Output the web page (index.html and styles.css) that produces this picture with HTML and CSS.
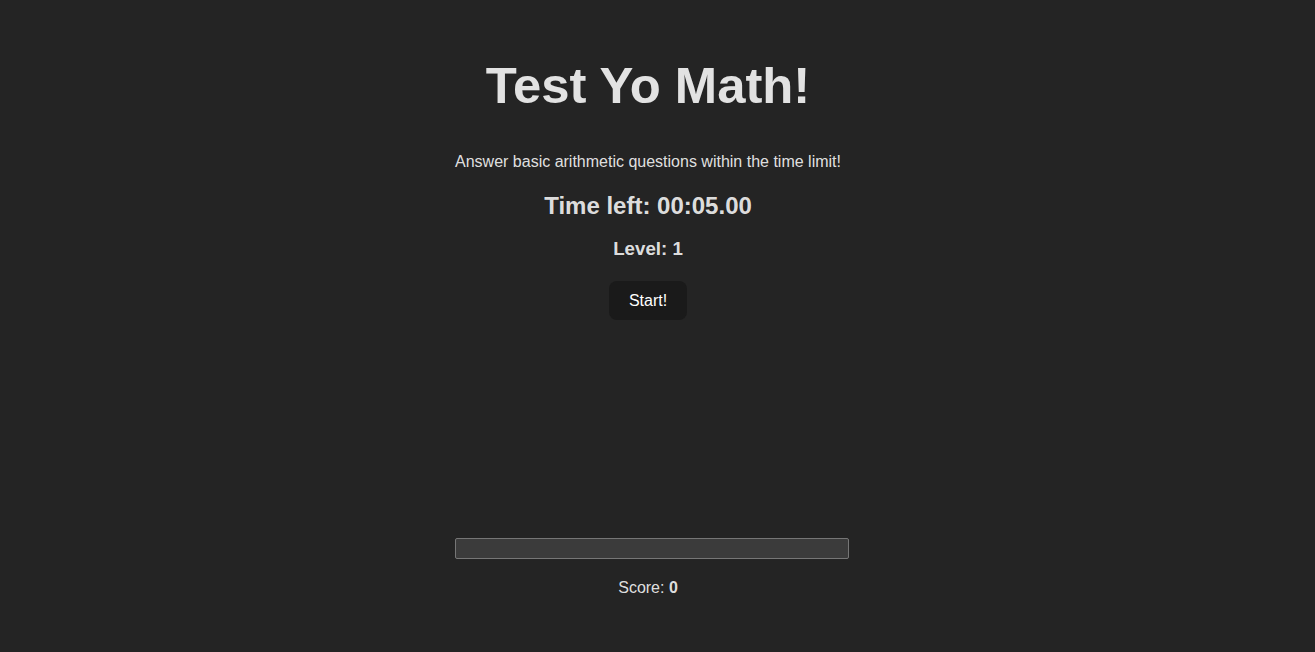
FILE: index.html
```html
<!DOCTYPE html>
<html lang="en">
<head>
<meta charset="utf-8">
<title>Test Yo Math!</title>
<link rel="stylesheet" href="styles.css">
</head>
<body>
<div class="app">
  <h1 class="title">Test Yo Math!</h1>
  <p class="intro">Answer basic arithmetic questions within the time limit!</p>
  <h2 class="timer">Time left: 00:05.00</h2>
  <h3 class="level">Level: 1</h3>
  <div class="actions"><button class="start">Start!</button></div>
  <div class="answer"><input class="answer-input" type="text"></div>
  <p class="score">Score: <strong>0</strong></p>
</div>
</body>
</html>
```

FILE: styles.css
```css
html, body {
  margin: 0;
  background: #242424;
}
body {
  font-family: "Liberation Sans", Arial, sans-serif;
  color: rgba(255, 255, 255, 0.87);
  display: flex;
  justify-content: center;
  padding-right: 19px;
  min-height: 100vh;
  box-sizing: border-box;
}
.app {
  width: 386px;
  text-align: center;
}
.title {
  margin: 58px 0 0;
  font-size: 50.8px;
  line-height: 56px;
  font-weight: 700;
}
.intro {
  margin: 36px 0 0;
  font-size: 16px;
  line-height: 24px;
}
.timer {
  margin: 17px 0 0;
  font-size: 24px;
  line-height: 30px;
  font-weight: 700;
}
.level {
  margin: 16px 0 0;
  font-size: 18.72px;
  line-height: 24px;
  font-weight: 700;
}
.actions {
  margin-top: 20px;
}
.start {
  font-family: inherit;
  font-size: 16px;
  font-weight: 500;
  line-height: normal;
  color: #fff;
  background: #1a1a1a;
  border: 1px solid transparent;
  border-radius: 8px;
  padding: 0.6em 1.2em;
  cursor: pointer;
}
.answer {
  margin-top: 218px;
  height: 21px;
}
.answer-input {
  display: block;
  width: 386px;
  height: 15px;
  padding: 2px 3px;
  margin: 0;
  border: 1px solid #767676;
  border-radius: 2px;
  background: #3b3b3b;
  color: #fff;
  font-family: inherit;
  font-size: 13.33px;
  outline: none;
}
.score {
  margin: 17px 0 0;
  font-size: 16px;
  line-height: 24px;
}
.score strong {
  font-weight: 700;
}
```
